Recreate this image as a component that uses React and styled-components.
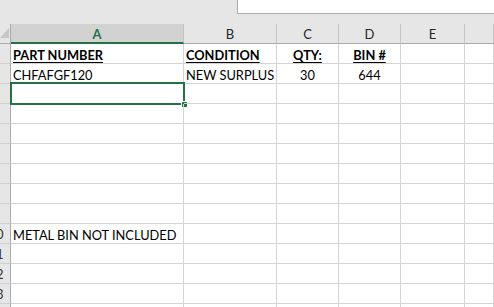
import React from 'react'
import styled, { createGlobalStyle } from 'styled-components'

const GlobalStyle = createGlobalStyle`
  html, body {
    margin: 0;
    padding: 0;
    background: #ffffff;
    overflow: hidden;
  }
  body {
    font-family: Lato, "Open Sans", "Liberation Sans", sans-serif;
  }
`

const COLUMNS = ['A', 'B', 'C', 'D', 'E', '']
const SELECTED_COL = 0
const SELECTED_ROW = 3
const ROW_COUNT = 14

// cell values per row number
const DATA = {
  1: [
    { text: 'PART NUMBER', bold: true },
    { text: 'CONDITION', bold: true },
    { text: 'QTY:', bold: true, center: true },
    { text: 'BIN #', bold: true, center: true },
  ],
  2: [
    { text: 'CHFAFGF120' },
    { text: 'NEW SURPLUS' },
    { text: '30', center: true },
    { text: '644', center: true },
  ],
  10: [{ text: 'METAL BIN NOT INCLUDED' }],
}

const App = () => {
  const rows = Array.from({ length: ROW_COUNT }, (_, i) => i + 1)
  return (
    <>
      <GlobalStyle />
      <Sheet>
        <TopBand>
          <FormulaBox />
        </TopBand>
        <Grid>
          <Corner />
          {COLUMNS.map((c, i) => (
            <ColHeader key={c || 'f'} $selected={i === SELECTED_COL}>
              {c}
            </ColHeader>
          ))}
          {rows.map((r) => (
            <React.Fragment key={r}>
              <RowHeader>
                <RowNum>{r}</RowNum>
              </RowHeader>
              {COLUMNS.map((c, i) => {
                const cell = (DATA[r] || [])[i]
                const selected = r === SELECTED_ROW && i === SELECTED_COL
                return (
                  <Cell key={c || 'f'} $center={cell?.center}>
                    {cell && <CellText $bold={cell.bold}>{cell.text}</CellText>}
                    {selected && (
                      <SelectionFrame>
                        <FillHandle />
                      </SelectionFrame>
                    )}
                  </Cell>
                )
              })}
            </React.Fragment>
          ))}
        </Grid>
      </Sheet>
    </>
  )
}

export default App

const Sheet = styled.div`
  width: 494px;
  height: 307px;
  overflow: hidden;
  background: #ffffff;
`

const TopBand = styled.div`
  height: 24px;
  background: #e6e6e6;
  display: flex;
  align-items: flex-start;
`

const FormulaBox = styled.div`
  margin-left: 237px;
  flex: 1;
  height: 13px;
  background: #ffffff;
  border-left: 1px solid #ababab;
  border-bottom: 1px solid #ababab;
`

const Grid = styled.div`
  display: grid;
  grid-template-columns: 11px 173px 93px 62px 62px 64px 1fr;
  grid-auto-rows: 20px;
`

const Corner = styled.div`
  position: relative;
  background: #e6e6e6;
  box-sizing: border-box;
  border-right: 1px solid #ababab;
  border-bottom: 1px solid #ababab;

  &::after {
    content: '';
    position: absolute;
    left: 0;
    top: 4px;
    width: 9px;
    height: 10px;
    background: #c6c6c6;
    clip-path: polygon(100% 0, 100% 100%, 0 100%);
  }
`

const ColHeader = styled.div`
  box-sizing: border-box;
  display: flex;
  align-items: center;
  justify-content: center;
  padding-top: 1px;
  background: ${(p) => (p.$selected ? '#d2d2d2' : '#e6e6e6')};
  border-right: 1px solid #c4c4c4;
  border-bottom: ${(p) => (p.$selected ? '2px solid #217346' : '1px solid #ababab')};
  color: ${(p) => (p.$selected ? '#217346' : '#262626')};
  font-weight: ${(p) => (p.$selected ? 700 : 400)};
  font-size: 13px;
`

const RowHeader = styled.div`
  box-sizing: border-box;
  display: flex;
  justify-content: flex-end;
  align-items: center;
  overflow: hidden;
  background: #e6e6e6;
  border-right: 1px solid #ababab;
  border-bottom: 1px solid #d0d0d0;
  color: #333333;
  font-size: 13px;
`

const RowNum = styled.span`
  flex-shrink: 0;
  width: 28px;
  text-align: center;
`

const Cell = styled.div`
  position: relative;
  box-sizing: border-box;
  display: flex;
  align-items: flex-end;
  justify-content: ${(p) => (p.$center ? 'center' : 'flex-start')};
  padding: 0 2px 0;
  border-right: 1px solid #d4d4d4;
  border-bottom: 1px solid #d4d4d4;
  font-size: 12.8px;
  line-height: 16px;
  color: #000000;
  white-space: nowrap;
`

const CellText = styled.span`
  font-weight: ${(p) => (p.$bold ? 700 : 400)};
  text-decoration: ${(p) => (p.$bold ? 'underline' : 'none')};
  text-underline-offset: 2px;
`

const SelectionFrame = styled.div`
  position: absolute;
  left: -1px;
  top: -2px;
  right: -2px;
  bottom: -2px;
  border: 2px solid #217346;
  pointer-events: none;
`

const FillHandle = styled.div`
  position: absolute;
  right: -4px;
  bottom: -4px;
  width: 6px;
  height: 6px;
  background: #217346;
  border-top: 1px solid #ffffff;
  border-left: 1px solid #ffffff;
  box-sizing: border-box;
`
